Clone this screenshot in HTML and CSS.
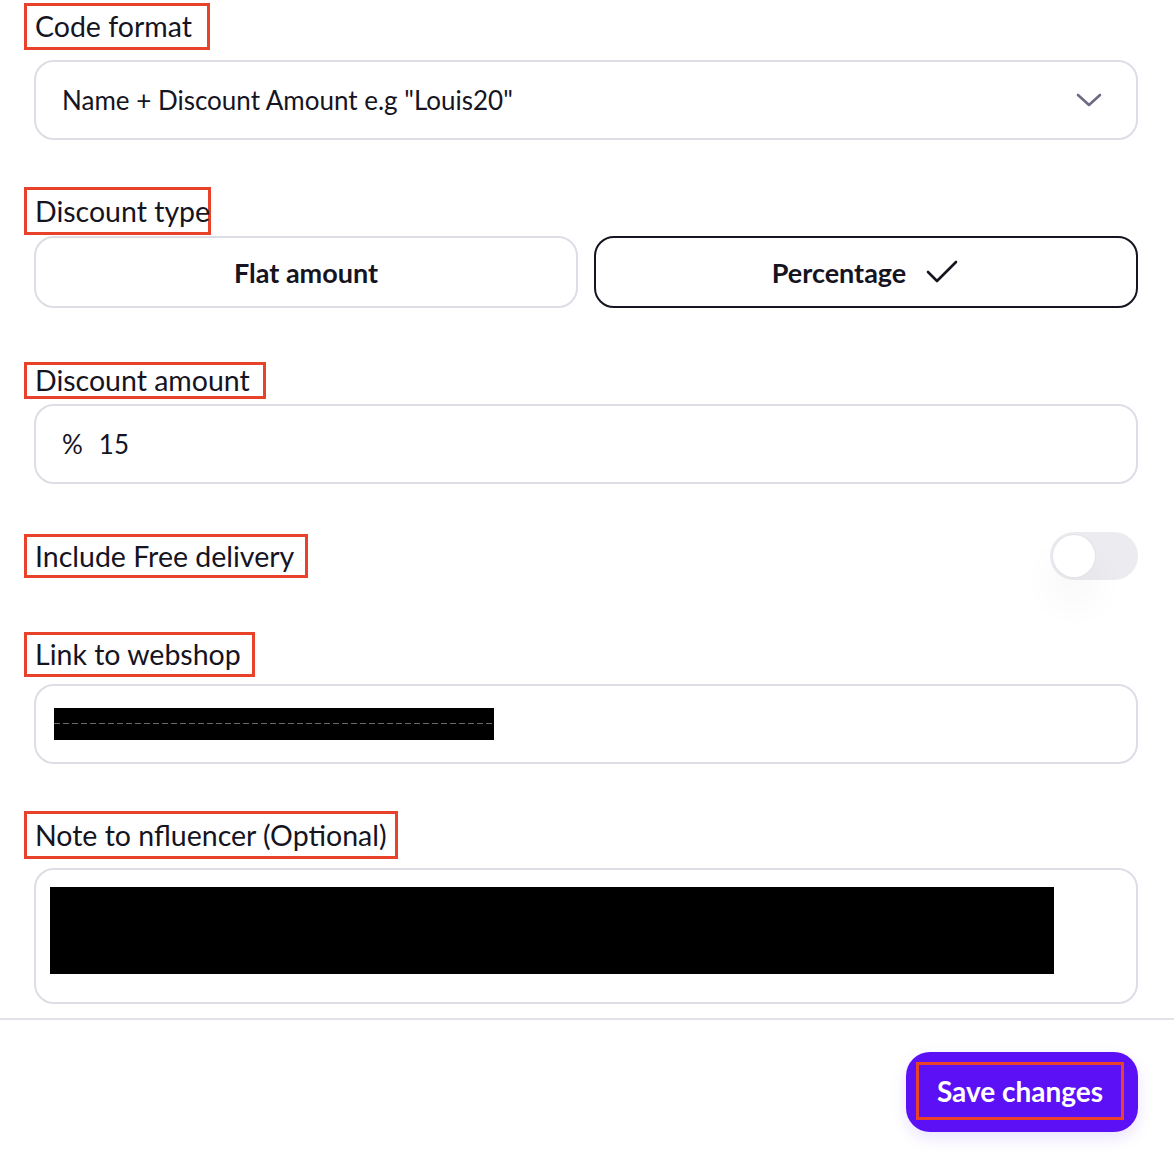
FILE: index.html
```html
<!DOCTYPE html>
<html lang="en">
<head>
  <meta charset="UTF-8" />
  <meta name="viewport" content="width=device-width, initial-scale=1.0" />
  <title>Discount code settings</title>
  <link rel="stylesheet" href="styles.css">
</head>
<body>
<div class="form">
  <div class="field field-first">
    <span class="label label-format">Code format</span>
    <div class="box select">
      <span>Name + Discount Amount e.g "Louis20"</span>
      <svg class="chevron" width="26" height="16" viewBox="0 0 26 16" fill="none" stroke="#6c6a82" stroke-width="2.6" stroke-linecap="round" stroke-linejoin="round"><path d="M2 3 L13 13 L24 3"/></svg>
    </div>
  </div>

  <div class="field field-type">
    <span class="label label-type">Discount type</span>
    <div class="choices">
      <button class="choice">Flat amount</button>
      <button class="choice active">Percentage
        <svg width="32" height="26" viewBox="0 0 32 26" fill="none" stroke="#15141f" stroke-width="2.6" stroke-linecap="round" stroke-linejoin="round"><path d="M2 13 L11 22 L30 3"/></svg>
      </button>
    </div>
  </div>

  <div class="field field-amount">
    <span class="label label-amount">Discount amount</span>
    <div class="box amount">
      <span class="unit">%</span>
      <span>15</span>
    </div>
  </div>

  <div class="field row">
    <span class="label label-delivery">Include Free delivery</span>
    <div class="toggle"><div class="knob"></div></div>
  </div>

  <div class="field field-link">
    <span class="label label-link">Link to webshop</span>
    <div class="box link">
      <div class="redact-line"></div>
    </div>
  </div>

  <div class="field field-note">
    <span class="label label-note">Note to nfluencer (Optional)</span>
    <div class="box note">
      <div class="redact-block"></div>
    </div>
  </div>
</div>

<div class="footer">
  <button class="save"><span class="save-label">Save changes</span></button>
</div>
</body>
</html>
```

FILE: styles.css
```css
body {
  margin: 0;
  background: #fff;
  font-family: Lato, "Noto Sans", sans-serif;
  color: #15141f;
}
.form {
  padding: 3px 36px 14px 34px;
}
.field {
  margin-top: 47px;
}
.field-first { margin-top: 0; }
.field-amount { margin-top: 54px; }
.field-link { margin-top: 52px; }

.label {
  display: inline-block;
  box-sizing: border-box;
  margin-left: -10px;
  border: 3px solid #e8432a;
  padding: 0 0 0 8px;
  font-size: 28.5px;
  line-height: 41px;
  white-space: nowrap;
}
.label-format { width: 186px; }
.label-type { width: 187px; line-height: 42px; }
.label-amount { width: 242px; line-height: 31px; }
.label-delivery { width: 284px; line-height: 38px; }
.label-link { width: 231px; line-height: 39px; }
.label-note { width: 374px; line-height: 42px; }

.box {
  box-sizing: border-box;
  border: 2px solid #dedde5;
  border-radius: 20px;
  background: #fff;
  font-size: 26px;
}
.select {
  margin-top: 10px;
  height: 80px;
  display: flex;
  align-items: center;
  justify-content: space-between;
  padding: 0 34px 0 26px;
}
.choices {
  margin-top: 1px;
  display: grid;
  grid-template-columns: 1fr 1fr;
  gap: 16px;
}
.choice {
  box-sizing: border-box;
  height: 72px;
  border: 2px solid #dedde5;
  border-radius: 20px;
  background: #fff;
  font-family: inherit;
  font-size: 27px;
  font-weight: 700;
  color: #15141f;
  display: flex;
  align-items: center;
  justify-content: center;
  gap: 20px;
}
.choice.active {
  border-color: #15141f;
  padding-right: 8px;
}
.amount {
  margin-top: 5px;
  height: 80px;
  display: flex;
  align-items: center;
  gap: 16px;
  padding-left: 26px;
}
.row {
  margin-top: 48px;
  display: flex;
  align-items: center;
  justify-content: space-between;
}
.toggle {
  width: 88px;
  height: 48px;
  border-radius: 24px;
  background: #ebebf0;
  padding: 3px;
  box-sizing: border-box;
}
.knob {
  width: 42px;
  height: 42px;
  border-radius: 50%;
  background: #fff;
  box-shadow: 0 0 0 1px #e2e2e8, 0 24px 40px rgba(0, 0, 0, 0.05);
}
.link {
  margin-top: 7px;
  height: 80px;
  display: flex;
  align-items: center;
  padding-left: 18px;
}
.redact-line {
  width: 440px;
  height: 32px;
  background-color: #000;
  background-image: repeating-linear-gradient(90deg, #6a6a6a 0 6px, #000 6px 9px);
  background-size: 100% 1px;
  background-position: 0 15px;
  background-repeat: no-repeat;
}
.note {
  margin-top: 9px;
  height: 136px;
  padding: 17px 0 0 14px;
}
.redact-block {
  width: 1004px;
  height: 87px;
  background: #000;
}
.footer {
  border-top: 2px solid #e2e2e8;
  display: flex;
  justify-content: flex-end;
  padding: 32px 36px 20px 0;
}
.save {
  box-sizing: border-box;
  width: 232px;
  height: 80px;
  border: none;
  border-radius: 24px;
  background: #5b10f5;
  padding: 10px 14px 12px 10px;
  box-shadow: 0 6px 16px rgba(91, 16, 245, 0.12);
}
.save-label {
  display: block;
  height: 100%;
  box-sizing: border-box;
  border: 3px solid #e8432a;
  color: #fff;
  font-family: Lato, "Noto Sans", sans-serif;
  font-size: 28px;
  font-weight: 700;
  line-height: 52px;
  text-align: center;
}
```
